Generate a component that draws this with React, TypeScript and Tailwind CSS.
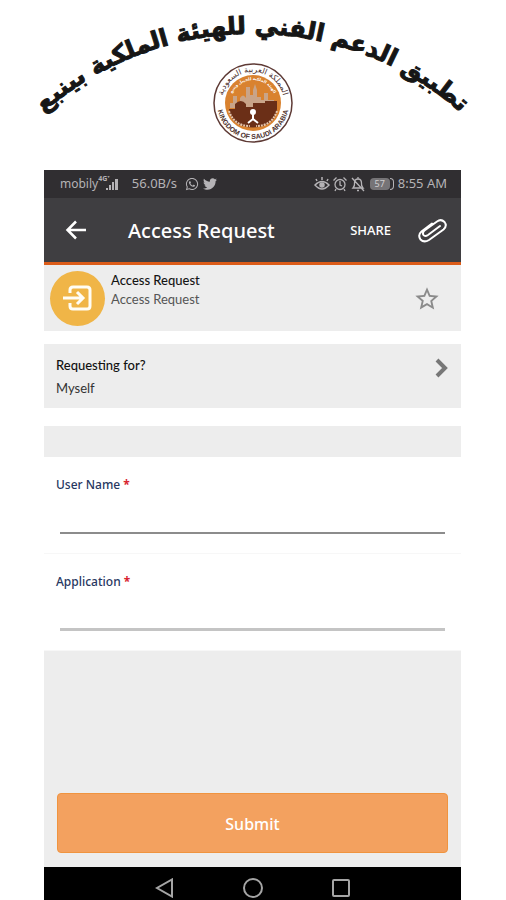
import { FaTwitter, FaWhatsapp } from "react-icons/fa"
import { MdStarBorder } from "react-icons/md"

type TFieldProps = {
  id: string
  label: string
  lineClass: string
}

function Banner() {
  return (
    <svg viewBox="0 0 506 160" className="w-full block" role="img">
      <path id="arc" d="M 32 123 A 316 316 0 0 1 472 123" fill="none" />
      <text
        direction="rtl"
        textAnchor="middle"
        className="font-['DejaVu_Sans',sans-serif] font-bold text-[24px] fill-[#161616] stroke-[#161616] stroke-1"
      >
        <textPath href="#arc" startOffset="50%">
          تطبيق الدعم الفني للهيئة الملكية بينبع
        </textPath>
      </text>
      <Emblem />
    </svg>
  )
}

function Emblem() {
  return (
    <g>
      <circle cx="253" cy="103" r="39" fill="#fff" stroke="#5e3a35" strokeWidth="1.5" />
      <circle cx="253" cy="103" r="28" fill="#d9822f" />
      <path
        d="M230 106 v-3 h3 v-7 h4 v6 h3 v-4 q3 -5 6 0 v-11 h4 v8 h3 v-5 l2 -6 l2 6 v7 h4 v3 h3 v-7 h4 v7 h6 v8 h-44z"
        fill="#c9a488"
      />
      <path
        d="M229 109 h6 v-5 q6 -6 11 0 v3 h7 v-4 h12 v-2 h12 v8 q-1 13 -14 17 q-10 3 -20 0 q-13 -4 -14 -17z"
        fill="#6b2f17"
      />
      <path d="M229 111 q5 15 21 15 M277 111 q-5 15 -21 15" fill="none" stroke="#e6c7ae" strokeWidth="2" strokeDasharray="2 1" />
      <circle cx="253" cy="112" r="3" fill="#fff" />
      <path d="M253 112 v8 M248 123 l5 -4 l5 4" fill="none" stroke="#fff" strokeWidth="2" />
      <path id="sealTop" d="M 222 103 A 31 31 0 0 1 284 103" fill="none" />
      <path id="sealInner" d="M 230 103 A 23 23 0 0 1 276 103" fill="none" />
      <path id="sealBottom" d="M 217 103 A 36 36 0 0 0 289 103" fill="none" />
      <text
        direction="rtl"
        textAnchor="middle"
        className="font-['DejaVu_Sans',sans-serif] text-[8px] fill-[#4d302c]"
      >
        <textPath href="#sealTop" startOffset="50%">المملكة العربية السعودية</textPath>
      </text>
      <text
        direction="rtl"
        textAnchor="middle"
        className="font-['DejaVu_Sans',sans-serif] font-bold text-[4px] fill-white"
      >
        <textPath href="#sealInner" startOffset="50%">الهيئة الملكية للجبيل وينبع</textPath>
      </text>
      <text
        textAnchor="middle"
        className="font-['Liberation_Sans',sans-serif] font-bold text-[7px] fill-[#4d302c]"
      >
        <textPath href="#sealBottom" startOffset="50%">KINGDOM OF SAUDI ARABIA</textPath>
      </text>
    </g>
  )
}

function StatusBar() {
  return (
    <div className="h-7 bg-[#302e31] text-[#b5b3b6] text-[13px] flex items-center justify-between pl-4 pr-[14px] font-['Noto_Sans',sans-serif]">
      <div className="flex items-center">
        <span className="text-xs">mobily</span>
        <span className="text-[7px] font-bold self-start">4G⁺</span>
        <svg viewBox="0 0 12 12" className="size-3 -ml-1" fill="currentColor">
          <path d="M0 10h2v2H0zM3 7h2v5H3zM6 4h2v8H6zM9 1h3v11H9z" />
        </svg>
        <span className="ml-[14px]">56.0B/s</span>
        <FaWhatsapp className="size-[14px] ml-2" />
        <FaTwitter className="size-[14px] ml-1" />
      </div>
      <div className="flex items-center gap-[2px]">
        <svg viewBox="0 0 16 16" className="size-4" fill="none" stroke="currentColor" strokeWidth="1.5">
          <path d="M1 9q7 -7 14 0q-7 8 -14 0zM3 5l-1 -2M8 4v-3M13 5l1 -2" />
          <circle cx="8" cy="9" r="2" fill="currentColor" />
        </svg>
        <svg viewBox="0 0 16 16" className="size-4" fill="none" stroke="currentColor" strokeWidth="1.3">
          <circle cx="8" cy="8.5" r="5" />
          <path d="M8 5v4l2 1M1.5 4.5l3 -3M14.5 4.5l-3 -3M4 13l-1 2M12 13l1 2" />
        </svg>
        <svg viewBox="0 0 16 16" className="size-4" fill="none" stroke="currentColor" strokeWidth="1.3">
          <path d="M3 12h10q-2 -2 -1.5 -5q0 -4 -3.5 -4q-3.5 0 -3.5 4q0.5 3 -1.5 5zM7 14.5h2M8 1v2M2 2l12 13" />
        </svg>
        <span className="flex items-center mx-[2px]">
          <span className="w-5 h-3 rounded-sm bg-[#767477] text-[#d0ced1] text-[9px] leading-3 text-center">57</span>
          <span className="w-1 h-3 rounded-r-sm border border-l-0 border-[#b5b3b6]" />
        </span>
        <span>8:55 AM</span>
      </div>
    </div>
  )
}

function Header() {
  return (
    <header className="h-[67px] bg-[#3f3e41] border-b-3 border-[#dc5c19] text-white flex items-center pt-[2px] pl-5 pr-3 font-['Noto_Sans',sans-serif]">
      <button type="button" aria-label="Back" className="w-6">
        <svg viewBox="0 0 24 24" className="size-6" fill="none" stroke="currentColor" strokeWidth="2.5">
          <path d="M22 11H4M12 2.5L3.5 11l8.5 8.5" />
        </svg>
      </button>
      <h1 className="flex-1 ml-10 text-xl font-medium">Access Request</h1>
      <button type="button" className="text-[13px] font-medium">SHARE</button>
      <button type="button" aria-label="Attach" className="ml-[26px]">
        <svg viewBox="0 0 32 28" className="w-8 h-7" fill="none" stroke="currentColor" strokeWidth="2" strokeLinecap="round">
          <path d="M23 9L11 18q-3 2 -4.5 0q-1.5 -2.5 1 -4.5L20 4.5q4 -3 7.5 0.5q3 4 -1 7.5L12 23q-5 3 -8.5 -0.5q-3 -4.5 1 -8L15 6.5" />
        </svg>
      </button>
    </header>
  )
}

function Field({ id, label, lineClass }: TFieldProps) {
  return (
    <div className="h-[97px] px-3 pt-[19px] border-b border-[#f7f7f7]">
      <label htmlFor={id} className="block text-xs leading-[18px] font-medium text-[#273761] font-['Noto_Sans',sans-serif]">
        {label} <span className="text-[#d8232f] font-bold">*</span>
      </label>
      <div className="px-1">
        <input id={id} type="text" className={`block w-full h-10 outline-none ${lineClass}`} />
      </div>
    </div>
  )
}

export default function App() {
  return (
    <main className="min-h-screen overflow-hidden bg-white flex flex-col">
      <Banner />
      <div className="flex-1 flex flex-col ml-11 mr-[45px] mt-[10px] text-[13px] font-['Lato',sans-serif]">
        <StatusBar />
        <Header />
        <section className="h-[66px] bg-[#ededed] flex items-center pl-[6px] pr-5">
          <span className="size-[55px] rounded-full bg-[#f0b547] flex items-center justify-center">
            <svg viewBox="0 0 32 28" className="w-8 h-7" fill="none" stroke="#fffdf5" strokeWidth="3">
              <path d="M8 9V6q0 -3 3 -3h14q3 0 3 3v16q0 3 -3 3H11q-3 0 -3 -3v-3M1 14h19M15 8l6 6l-6 6" />
            </svg>
          </span>
          <div className="flex-1 self-start ml-[6px] mt-[6px] leading-[19px]">
            <p className="text-[#151515] font-medium">Access Request</p>
            <p className="text-[#555]">Access Request</p>
          </div>
          <button type="button" aria-label="Favourite" className="mt-[2px]">
            <MdStarBorder className="size-7 text-[#8b8b8b]" />
          </button>
        </section>
        <section className="h-16 mt-[13px] bg-[#ededed] flex justify-between pl-3 pr-3">
          <div className="pt-[11px]">
            <p className="leading-5 text-[#111] font-medium">Requesting for?</p>
            <p className="mt-1 leading-[19px] text-[#333]">Myself</p>
          </div>
          <button type="button" aria-label="Choose person" className="self-start mt-[14px]">
            <svg viewBox="0 0 14 20" className="w-[14px] h-5" fill="none" stroke="#777" strokeWidth="4">
              <path d="M2 2l8 8l-8 8" />
            </svg>
          </button>
        </section>
        <form className="flex-1 flex flex-col mt-[18px]">
          <div className="h-[31px] bg-[#ededed]" />
          <Field id="userName" label="User Name" lineClass="border-b-2 border-[#8c8c8c]" />
          <Field id="application" label="Application" lineClass="border-b-3 border-[#c4c4c4]" />
          <div className="flex-1 bg-[#ededed] flex flex-col justify-end px-[13px] pt-[142px] pb-[14px]">
            <button
              type="submit"
              className="h-[60px] pt-[2px] rounded-sm border border-[#f0943f] bg-[#f3a15f] text-white text-base font-medium font-['Noto_Sans',sans-serif]"
            >
              Submit
            </button>
          </div>
        </form>
        <nav className="h-[33px] bg-black pt-[11px] flex justify-center items-start gap-[68px] text-[#a5a5a5]">
          <button type="button" aria-label="Back">
            <svg viewBox="0 0 20 20" className="block size-5" fill="none" stroke="currentColor" strokeWidth="2">
              <path d="M17 1.5v17L2 10z" />
            </svg>
          </button>
          <button type="button" aria-label="Home">
            <svg viewBox="0 0 20 20" className="block size-5" fill="none" stroke="currentColor" strokeWidth="2">
              <circle cx="10" cy="10" r="9" />
            </svg>
          </button>
          <button type="button" aria-label="Recents">
            <svg viewBox="0 0 20 20" className="block size-5" fill="none" stroke="currentColor" strokeWidth="2">
              <rect x="2" y="2" width="16" height="16" rx="1" />
            </svg>
          </button>
        </nav>
      </div>
    </main>
  )
}
